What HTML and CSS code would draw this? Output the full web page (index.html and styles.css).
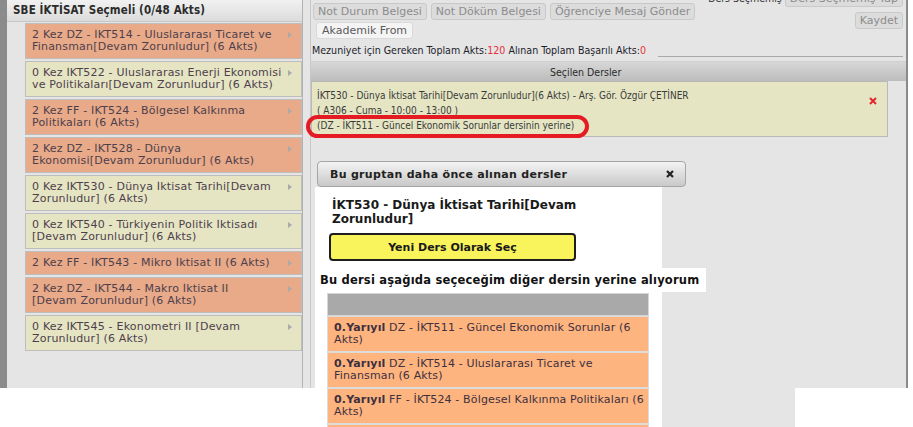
FILE: index.html
```html
<!DOCTYPE html>
<html lang="tr">
<head>
<meta charset="utf-8">
<title>Ders Seçimi</title>
<link rel="stylesheet" href="styles.css">
</head>
<body>
<div class="page">
  <aside class="left">
    <div class="left-head">SBE İKTİSAT Seçmeli (0/48 Akts)</div>
    <ul class="courses">
      <li class="course taken"><span class="c-text">2 Kez DZ - İKT514 - Uluslararası Ticaret ve<br>Finansman[Devam Zorunludur] (6 Akts)</span><i class="arrow"></i></li>
      <li class="course open"><span class="c-text">0 Kez İKT522 - Uluslararası Enerji Ekonomisi<br>ve Politikaları[Devam Zorunludur] (6 Akts)</span><i class="arrow"></i></li>
      <li class="course taken"><span class="c-text">2 Kez FF - İKT524 - Bölgesel Kalkınma<br>Politikaları (6 Akts)</span><i class="arrow"></i></li>
      <li class="course taken"><span class="c-text">2 Kez DZ - İKT528 - Dünya<br>Ekonomisi[Devam Zorunludur] (6 Akts)</span><i class="arrow"></i></li>
      <li class="course open"><span class="c-text">0 Kez İKT530 - Dünya İktisat Tarihi[Devam<br>Zorunludur] (6 Akts)</span><i class="arrow"></i></li>
      <li class="course open"><span class="c-text">0 Kez İKT540 - Türkiyenin Politik İktisadı<br>[Devam Zorunludur] (6 Akts)</span><i class="arrow"></i></li>
      <li class="course taken"><span class="c-text">2 Kez FF - İKT543 - Mikro İktisat II (6 Akts)</span><i class="arrow"></i></li>
      <li class="course taken"><span class="c-text">2 Kez DZ - İKT544 - Makro İktisat II<br>[Devam Zorunludur] (6 Akts)</span><i class="arrow"></i></li>
      <li class="course open"><span class="c-text">0 Kez İKT545 - Ekonometri II [Devam<br>Zorunludur] (6 Akts)</span><i class="arrow"></i></li>
    </ul>
  </aside>
  <div class="splitter"></div>
  <main class="right">
    <div class="rp-top">
      <div class="rp-btns">
        <div class="btn-row">
          <button class="btn">Not Durum Belgesi</button>
          <button class="btn">Not Döküm Belgesi</button>
          <button class="btn">Öğrenciye Mesaj Gönder</button>
        </div>
        <div class="btn-row second">
          <button class="btn btn-light">Akademik From</button>
        </div>
      </div>
      <div class="rp-actions">
        <div class="act-row">
          <span class="act-label tah">Ders Seçmemiş</span>
          <button class="btn">Ders Seçmemiş Yap</button>
        </div>
        <button class="btn">Kaydet</button>
      </div>
    </div>
    <div class="info-row">
      <span class="info-text tah">Mezuniyet için Gereken Toplam Akts:<span class="red">120</span> Alınan Toplam Başarılı Akts:<span class="red">0</span></span>
      <span class="info-line"></span>
    </div>
    <div class="sel-head tah">Seçilen Dersler</div>
    <div class="sel-box">
      <div class="sel-lines tah">
        <div>İKT530 - Dünya İktisat Tarihi[Devam Zorunludur](6 Akts) - Arş. Gör. Özgür ÇETİNER</div>
        <div>( A306 - Cuma - 10:00 - 13:00 )</div>
        <div>(DZ - İKT511 - Güncel Ekonomik Sorunlar dersinin yerine)</div>
      </div>
      <svg class="sel-x" width="8" height="8" viewBox="0 0 8 8"><path d="M1 1L7 7M7 1L1 7" stroke="#e3262d" stroke-width="2" fill="none"/></svg>
      <div class="annot"></div>
    </div>
  </main>
</div>

<div class="dialog">
  <div class="dlg-title">
    <span>Bu gruptan daha önce alınan dersler</span>
    <svg class="dlg-close" width="8" height="8" viewBox="0 0 8 8"><path d="M1 1L7 7M7 1L1 7" stroke="#222" stroke-width="2.2" fill="none"/></svg>
  </div>
  <div class="dlg-body">
    <div class="dlg-course">İKT530 - Dünya İktisat Tarihi[Devam Zorunludur]</div>
    <button class="btn-yellow">Yeni Ders Olarak Seç</button>
  </div>
  <div class="dlg-sub">Bu dersi aşağıda seçeceğim diğer dersin yerine alıyorum</div>
  <div class="dlg-list">
    <div class="list-head"></div>
    <div class="list-item"><b>0.Yarıyıl</b> DZ - İKT511 - Güncel Ekonomik Sorunlar (6<br>Akts)</div>
    <div class="list-item"><b>0.Yarıyıl</b> DZ - İKT514 - Uluslararası Ticaret ve<br>Finansman (6 Akts)</div>
    <div class="list-item"><b>0.Yarıyıl</b> FF - İKT524 - Bölgesel Kalkınma Politikaları (6<br>Akts)</div>
    <div class="list-item"><b>0.Yarıyıl</b> DZ - İKT528 - Dünya Ekonomisi (6 Akts)</div>
  </div>
</div>
</body>
</html>
```
FILE: styles.css
```css
* { box-sizing: border-box; margin: 0; padding: 0; }
html, body { width: 913px; height: 427px; overflow: hidden; background: #fff; }
body {
  position: relative;
  font-family: "DejaVu Sans", Verdana, sans-serif;
  font-size: 11px;
  color: #333;
}
.tah {
  font-family: "DejaVu Sans Condensed", "DejaVu Sans", sans-serif;
  font-stretch: condensed;
  font-size: 10.5px;
}
.page { display: flex; width: 908px; height: 388px; }

/* left panel */
.left {
  width: 303px;
  background: #e5e5e5;
  border-left: 7px solid #8b8b8b;
  border-right: 1px solid #b3b3b3;
}
.left-head {
  height: 22px;
  line-height: 21px;
  padding-left: 6px;
  font-family: "DejaVu Sans Condensed", "DejaVu Sans", sans-serif;
  font-stretch: condensed;
  font-size: 11.5px;
  letter-spacing: 0.15px;
  font-weight: bold;
  color: #2b2b2b;
  background: linear-gradient(#f1f1f1, #dcdcdc);
  border-bottom: 1px solid #c6c6c6;
}
.courses { list-style: none; padding: 1px 0 0 18px; }
.course {
  display: flex;
  border: 1px solid #bdbdbd;
  padding: 5px 0 5px 6px;
  margin-bottom: 2px;
  line-height: 12px;
  letter-spacing: 0.2px;
  color: #4d404d;
  white-space: nowrap;
}
.course.taken { background: #e8aa88; }
.course.open { background: #e5e5c3; }
.c-text { flex: 1; overflow: hidden; }
.arrow {
  width: 18px;
  flex: none;
}
.arrow::before {
  content: "";
  display: block;
  margin: 3px 0 0 5px;
  width: 0; height: 0;
  border-left: 4px solid #a9a9a9;
  border-top: 3px solid transparent;
  border-bottom: 3px solid transparent;
}

.splitter {
  width: 8px;
  background: #e5e5e5;
  border-right: 1px solid #c8c8c8;
}

/* right panel */
.right {
  width: 597px;
  background: #e5e5e5;
  border-right: 2px solid #8a8a8a;
}
.rp-top { display: flex; justify-content: space-between; height: 42px; }
.rp-btns { padding: 3px 0 0 2px; }
.btn-row { display: flex; gap: 4px; }
.btn-row.second { margin: 2px 0 0 3px; }
.btn {
  font-family: "DejaVu Sans", Verdana, sans-serif;
  font-size: 11px;
  color: #8c8c8c;
  background: #dcdcdc;
  border: 1px solid #c9c9c9;
  border-radius: 3px;
  height: 17px;
  line-height: 15px;
  padding: 0 4px;
}
.btn-light { background: #f4f4f4; border-color: #dadada; color: #5a5a5a; padding: 0 5px; }
.rp-actions {
  display: flex;
  flex-direction: column;
  align-items: flex-end;
  gap: 5px;
  margin-top: -11px;
  padding-right: 3px;
}
.act-row { display: flex; align-items: center; gap: 3px; }
.act-row .btn { height: 18px; }
.act-label { color: #333; }

.info-row { display: flex; align-items: flex-end; height: 15px; }
.info-text { padding-left: 1px; color: #1d1d2b; line-height: 14px; white-space: nowrap; font-size: 10.6px; }
.red { color: #e8303a; }
.info-line { flex: 1; margin: 0 3px 0 12px; border-bottom: 1px solid #a9a9a9; }

.sel-head {
  margin-top: 4px;
  height: 20px;
  line-height: 20px;
  padding-left: 239px;
  font-size: 10.5px;
  color: #2a2a2a;
  background: linear-gradient(#d7d7d7, #bcbcbc);
  border-top: 1px solid #d0d0d0;
}
.sel-box {
  position: relative;
  display: flex;
  width: 577px;
  height: 56px;
  background: #e5e5c3;
  border: 1px solid #b9b9b9;
  padding: 6px 0 0 5px;
}
.sel-lines { flex: 1; line-height: 15px; font-size: 10px; color: #3a3a3a; }
.sel-x { margin: 9px 10px 0 0; }
.annot {
  position: absolute;
  left: -6px;
  top: 33px;
  width: 283px;
  height: 23px;
  border: 4px solid #e51b24;
  border-radius: 12px;
}

/* dialog */
.dialog {
  position: absolute;
  left: 315px;
  top: 158px;
  width: 480px;
  height: 269px;
  background: #e5e5e5;
  padding-top: 3px;
  display: flex;
  flex-direction: column;
}
.dlg-title {
  display: flex;
  justify-content: space-between;
  align-items: center;
  margin-left: 2px;
  width: 369px;
  height: 26px;
  padding: 0 11px 0 12px;
  border: 1px solid #a6a6a6;
  border-radius: 4px;
  background: linear-gradient(#f3f3f3, #c9c9c9);
  font-weight: bold;
  letter-spacing: 0.3px;
  color: #222;
}
.dlg-body {
  width: 347px;
  background: #fff;
  padding: 11px 0 7px 14px;
}
.dlg-course {
  width: 253px;
  padding-left: 3px;
  font-size: 12px;
  font-weight: bold;
  line-height: 14px;
  color: #1a1a1a;
}
.btn-yellow {
  display: block;
  margin-top: 7px;
  width: 247px;
  height: 28px;
  background: #f9f35c;
  border: 2px solid #1e1e1e;
  border-radius: 4px;
  font-family: "DejaVu Sans", Verdana, sans-serif;
  font-size: 11px;
  font-weight: bold;
  color: #1a1a1a;
}
.dlg-sub {
  width: 391px;
  height: 24px;
  line-height: 24px;
  padding-left: 5px;
  background: #fff;
  font-weight: bold;
  font-size: 11.5px;
  letter-spacing: 0.2px;
  color: #111;
  white-space: nowrap;
}
.dlg-list {
  flex: 1;
  width: 347px;
  background: #fff;
  padding: 1px 13px 0 12px;
  overflow: hidden;
}
.list-head {
  height: 23px;
  background: #a9a9a9;
  border: 1px solid #d6d6d6;
}
.list-item {
  background: #fdb47f;
  border: 1px solid #dcdcdc;
  padding: 5px 4px 5px 6px;
  line-height: 12px;
  letter-spacing: 0.15px;
  white-space: nowrap;
  overflow: hidden;
  color: #3e303e;
}
```
